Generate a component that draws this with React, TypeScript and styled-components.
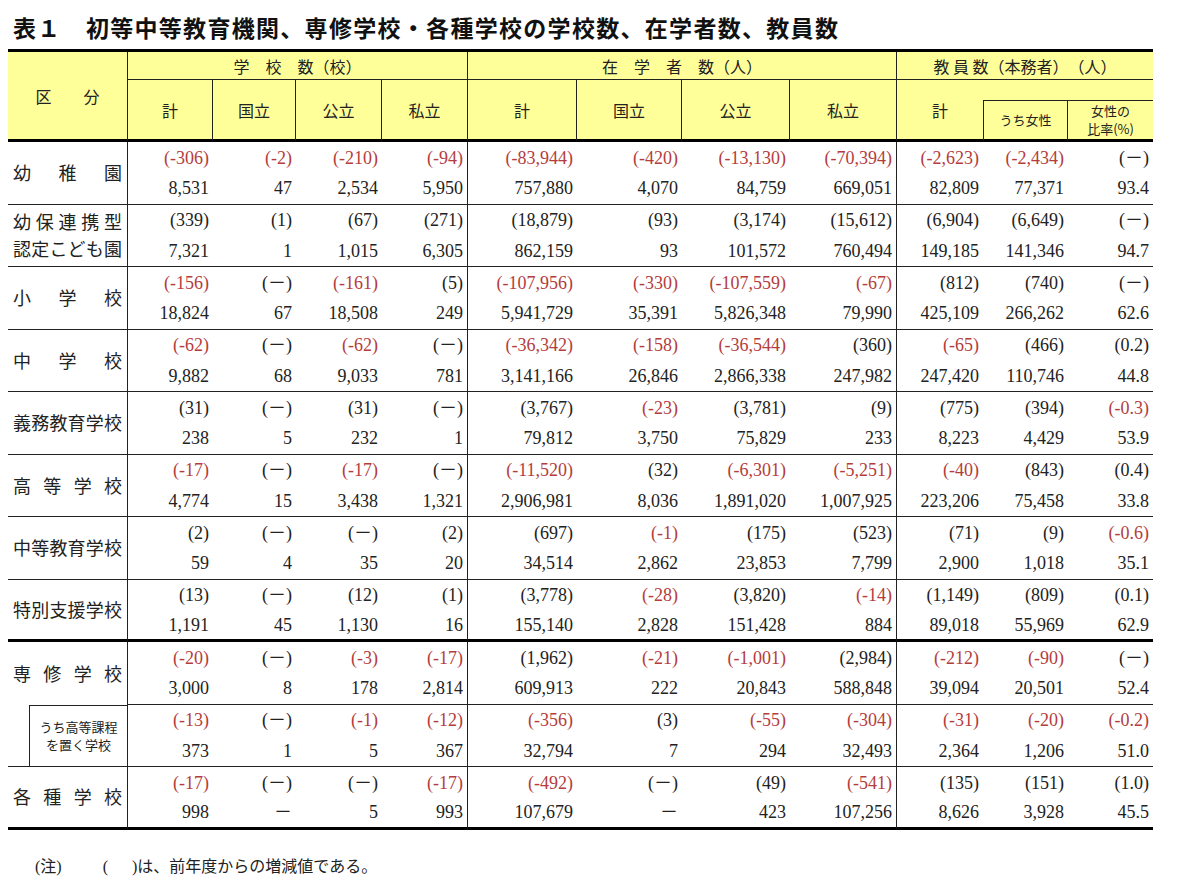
import React from 'react';
import styled, { createGlobalStyle } from 'styled-components';

type Sep = 'thin' | 'thick' | 'none';

interface RowType {
    label: string[];
    sub?: boolean;
    sep: Sep;
    top: string[];
    bottom: string[];
}

const colWidths = [120, 85, 83, 86, 86, 109, 105, 108, 107, 86, 85, 85];
// data columns that end a group get a vertical rule
const groupEnds = [3, 7];

const rows: RowType[] = [
    {
        label: ['幼稚園'], sep: 'thin',
        top: ['(-306)', '(-2)', '(-210)', '(-94)', '(-83,944)', '(-420)', '(-13,130)', '(-70,394)', '(-2,623)', '(-2,434)', '(－)'],
        bottom: ['8,531', '47', '2,534', '5,950', '757,880', '4,070', '84,759', '669,051', '82,809', '77,371', '93.4'],
    },
    {
        label: ['幼保連携型', '認定こども園'], sep: 'thin',
        top: ['(339)', '(1)', '(67)', '(271)', '(18,879)', '(93)', '(3,174)', '(15,612)', '(6,904)', '(6,649)', '(－)'],
        bottom: ['7,321', '1', '1,015', '6,305', '862,159', '93', '101,572', '760,494', '149,185', '141,346', '94.7'],
    },
    {
        label: ['小学校'], sep: 'thin',
        top: ['(-156)', '(－)', '(-161)', '(5)', '(-107,956)', '(-330)', '(-107,559)', '(-67)', '(812)', '(740)', '(－)'],
        bottom: ['18,824', '67', '18,508', '249', '5,941,729', '35,391', '5,826,348', '79,990', '425,109', '266,262', '62.6'],
    },
    {
        label: ['中学校'], sep: 'thin',
        top: ['(-62)', '(－)', '(-62)', '(－)', '(-36,342)', '(-158)', '(-36,544)', '(360)', '(-65)', '(466)', '(0.2)'],
        bottom: ['9,882', '68', '9,033', '781', '3,141,166', '26,846', '2,866,338', '247,982', '247,420', '110,746', '44.8'],
    },
    {
        label: ['義務教育学校'], sep: 'thin',
        top: ['(31)', '(－)', '(31)', '(－)', '(3,767)', '(-23)', '(3,781)', '(9)', '(775)', '(394)', '(-0.3)'],
        bottom: ['238', '5', '232', '1', '79,812', '3,750', '75,829', '233', '8,223', '4,429', '53.9'],
    },
    {
        label: ['高等学校'], sep: 'thin',
        top: ['(-17)', '(－)', '(-17)', '(－)', '(-11,520)', '(32)', '(-6,301)', '(-5,251)', '(-40)', '(843)', '(0.4)'],
        bottom: ['4,774', '15', '3,438', '1,321', '2,906,981', '8,036', '1,891,020', '1,007,925', '223,206', '75,458', '33.8'],
    },
    {
        label: ['中等教育学校'], sep: 'thin',
        top: ['(2)', '(－)', '(－)', '(2)', '(697)', '(-1)', '(175)', '(523)', '(71)', '(9)', '(-0.6)'],
        bottom: ['59', '4', '35', '20', '34,514', '2,862', '23,853', '7,799', '2,900', '1,018', '35.1'],
    },
    {
        label: ['特別支援学校'], sep: 'thick',
        top: ['(13)', '(－)', '(12)', '(1)', '(3,778)', '(-28)', '(3,820)', '(-14)', '(1,149)', '(809)', '(0.1)'],
        bottom: ['1,191', '45', '1,130', '16', '155,140', '2,828', '151,428', '884', '89,018', '55,969', '62.9'],
    },
    {
        label: ['専修学校'], sep: 'thin',
        top: ['(-20)', '(－)', '(-3)', '(-17)', '(1,962)', '(-21)', '(-1,001)', '(2,984)', '(-212)', '(-90)', '(－)'],
        bottom: ['3,000', '8', '178', '2,814', '609,913', '222', '20,843', '588,848', '39,094', '20,501', '52.4'],
    },
    {
        label: ['うち高等課程', 'を置く学校'], sub: true, sep: 'thin',
        top: ['(-13)', '(－)', '(-1)', '(-12)', '(-356)', '(3)', '(-55)', '(-304)', '(-31)', '(-20)', '(-0.2)'],
        bottom: ['373', '1', '5', '367', '32,794', '7', '294', '32,493', '2,364', '1,206', '51.0'],
    },
    {
        label: ['各種学校'], sep: 'thick',
        top: ['(-17)', '(－)', '(－)', '(-17)', '(-492)', '(－)', '(49)', '(-541)', '(135)', '(151)', '(1.0)'],
        bottom: ['998', '－', '5', '993', '107,679', '－', '423', '107,256', '8,626', '3,928', '45.5'],
    },
];

const line = (sep?: Sep) =>
    sep === 'thick' ? '3px solid #000' : sep === 'thin' ? '1px solid #222' : 'none';

const App: React.FC = () => {
    return (
        <Page>
            <GlobalStyle />
            <Title>表１　初等中等教育機関、専修学校・各種学校の学校数、在学者数、教員数</Title>
            <Table>
                <colgroup>
                    {colWidths.map((w, i) => <Col key={i} $w={w} />)}
                </colgroup>
                <thead>
                    <tr>
                        <HeadCell rowSpan={3} $r $b='thick'>区　　分</HeadCell>
                        <HeadCell colSpan={4} $r $b='thin'><HeadBox $h={27}>学　校　数（校）</HeadBox></HeadCell>
                        <HeadCell colSpan={4} $r $b='thin'><HeadBox $h={27}>在　学　者　数（人）</HeadBox></HeadCell>
                        <HeadCell colSpan={3} $b='thin'><HeadBox $h={27}>教 員 数（本務者）　（人）</HeadBox></HeadCell>
                    </tr>
                    <tr>
                        {['計', '国立', '公立', '私立', '計', '国立', '公立', '私立'].map((t, i) => (
                            <HeadCell key={i} rowSpan={2} $r $b='thick'>{t}</HeadCell>
                        ))}
                        <HeadCell rowSpan={2} $b='thick'>計</HeadCell>
                        <HeadCell colSpan={2} $b='thin'><HeadBox $h={20} /></HeadCell>
                    </tr>
                    <tr>
                        <HeadCell $l $r $b='thick'>
                            <HeadBox $h={38}><Small>うち女性</Small></HeadBox>
                        </HeadCell>
                        <HeadCell $b='thick'>
                            <HeadBox $h={38}>
                                <Small>
                                    <div>女性の</div>
                                    <div>比率(%)</div>
                                </Small>
                            </HeadBox>
                        </HeadCell>
                    </tr>
                </thead>
                <tbody>
                    {rows.map((row, ri) => {
                        const next = rows[ri + 1];
                        const labelSep: Sep = next?.sub ? 'none' : row.sep;
                        return (
                            <tr key={ri}>
                                {row.sub ? (
                                    <SubLabelCell $sep={row.sep}>
                                        <SubBox $h={row.sep === 'thick' ? 59.5 : 61.5}>
                                            {row.label.map((l) => <div key={l}>{l}</div>)}
                                        </SubBox>
                                    </SubLabelCell>
                                ) : (
                                    <LabelCell $sep={labelSep}>
                                        {row.label.map((l) => (
                                            <Spread key={l}>
                                                {Array.from(l).map((c, ci) => <span key={ci}>{c}</span>)}
                                            </Spread>
                                        ))}
                                    </LabelCell>
                                )}
                                {row.top.map((t, ci) => (
                                    <DataCell key={ci} $sep={row.sep} $r={groupEnds.includes(ci)}>
                                        <Stack $h={row.sep === 'thick' ? 59.5 : 61.5}>
                                            <Num $neg={t.startsWith('(-')}>{t}</Num>
                                            <Num $neg={false}>{row.bottom[ci]}</Num>
                                        </Stack>
                                    </DataCell>
                                ))}
                            </tr>
                        );
                    })}
                </tbody>
            </Table>
            <Note>
                <span>(注)</span>
                <NoteParen>(</NoteParen>
                <NoteText>)は、前年度からの増減値である。</NoteText>
            </Note>
        </Page>
    );
};

export default App;

const GlobalStyle = createGlobalStyle`
html, body {
    margin: 0;
    padding: 0;
    background: #fff;
}
body {
    font-family: "Liberation Serif", "Noto Sans CJK JP", serif;
    color: #222;
}
`;

const Page = styled.div`
    width: 1200px;
    padding: 0 8px;
    box-sizing: border-box;
`;

const Title = styled.h1`
    margin: 0;
    height: 49px;
    box-sizing: border-box;
    padding: 12px 0 0 5px;
    font-family: "Noto Sans CJK JP", sans-serif;
    font-weight: 700;
    font-size: 23px;
    line-height: 30px;
    letter-spacing: 1.3px;
    color: #111;
    white-space: nowrap;
`;

const Table = styled.table`
    border-collapse: separate;
    border-spacing: 0;
    table-layout: fixed;
    width: 1145px;
    border-top: 3px solid #000;
`;

const Col = styled.col<{ $w: number }>`
    width: ${({ $w }) => $w}px;
`;

const HeadCell = styled.th<{ $r?: boolean; $l?: boolean; $b?: Sep }>`
    padding: 0;
    box-sizing: border-box;
    background: #ffff99;
    font-family: "Noto Sans CJK JP", sans-serif;
    font-weight: 400;
    font-size: 16px;
    color: #222;
    text-align: center;
    vertical-align: middle;
    border-right: ${({ $r }) => ($r ? '1px solid #222' : 'none')};
    border-left: ${({ $l }) => ($l ? '1px solid #222' : 'none')};
    border-bottom: ${({ $b }) => line($b)};
`;

const HeadBox = styled.div<{ $h: number }>`
    height: ${({ $h }) => $h}px;
    display: flex;
    align-items: center;
    justify-content: center;
    white-space: nowrap;
`;

const Small = styled.div`
    font-size: 13px;
    line-height: 18px;
`;

const LabelCell = styled.td<{ $sep: Sep }>`
    padding: 0 5px;
    box-sizing: border-box;
    border-right: 1px solid #222;
    border-bottom: ${({ $sep }) => line($sep)};
    font-family: "Noto Sans CJK JP", sans-serif;
    font-size: 18px;
    color: #222;
    vertical-align: middle;
`;

const Spread = styled.div`
    display: flex;
    justify-content: space-between;
    line-height: 27px;
`;

const SubLabelCell = styled.td<{ $sep: Sep }>`
    padding: 0 0 0 21px;
    box-sizing: border-box;
    border-right: 1px solid #222;
    border-bottom: ${({ $sep }) => line($sep)};
    vertical-align: top;
`;

const SubBox = styled.div<{ $h: number }>`
    height: ${({ $h }) => $h}px;
    box-sizing: border-box;
    border-left: 1px solid #222;
    border-top: 1px solid #222;
    display: flex;
    flex-direction: column;
    align-items: center;
    justify-content: center;
    font-family: "Noto Sans CJK JP", sans-serif;
    font-size: 13px;
    line-height: 18px;
    color: #222;
`;

const DataCell = styled.td<{ $sep: Sep; $r?: boolean }>`
    padding: 0 4px 0 0;
    box-sizing: border-box;
    text-align: right;
    white-space: nowrap;
    border-right: ${({ $r }) => ($r ? '1px solid #222' : 'none')};
    border-bottom: ${({ $sep }) => line($sep)};
`;

const Stack = styled.div<{ $h: number }>`
    height: ${({ $h }) => $h}px;
    display: grid;
    grid-template-rows: 31px 1fr;
    align-items: center;
`;

const Num = styled.span<{ $neg: boolean }>`
    font-size: 18px;
    line-height: 20px;
    color: ${({ $neg }) => ($neg ? '#b53c3c' : '#222')};
`;

const Note = styled.p`
    margin: 27px 0 0;
    padding-left: 27px;
    display: flex;
    align-items: baseline;
    font-size: 16px;
    line-height: 20px;
    color: #222;
`;

const NoteParen = styled.span`
    margin-left: 41px;
`;

const NoteText = styled.span`
    margin-left: 24px;
`;
